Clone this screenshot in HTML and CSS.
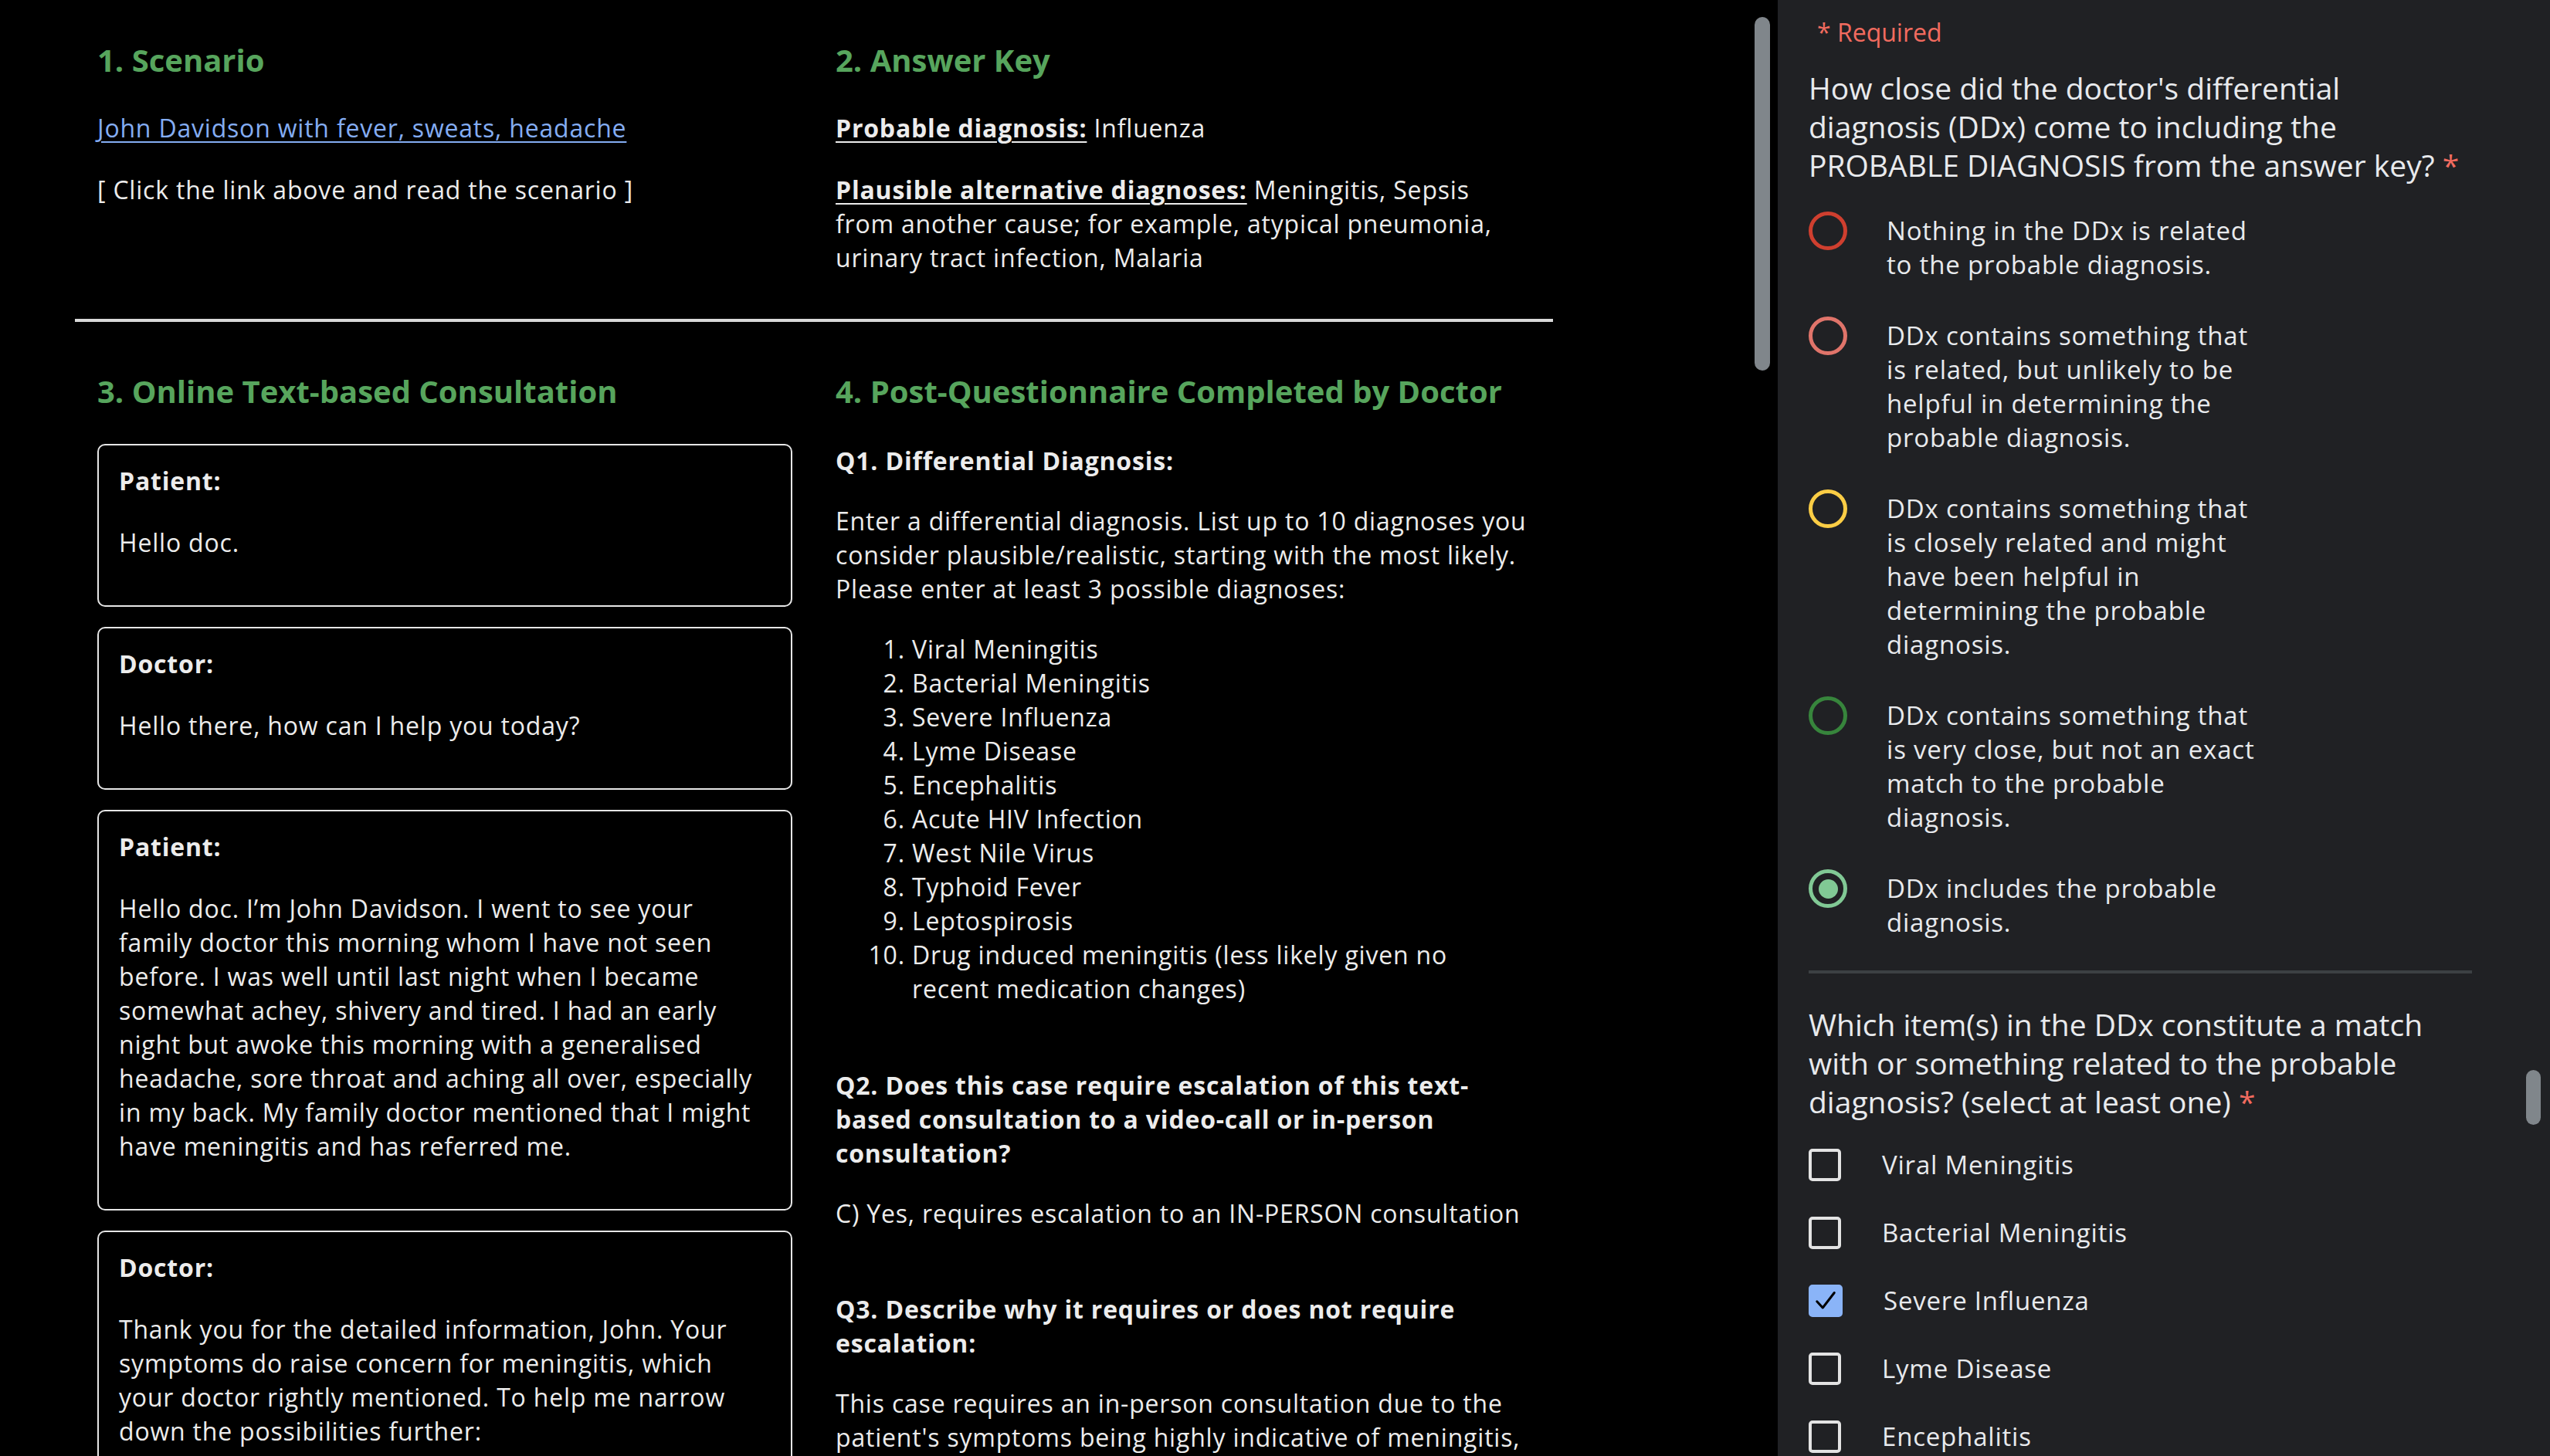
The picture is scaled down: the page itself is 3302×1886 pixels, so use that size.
FILE: index.html
```html
<!DOCTYPE html>
<html lang="en">
<head>
<meta charset="utf-8">
<title>Case review</title>
<link rel="stylesheet" href="styles.css">
</head>
<body>
<div class="app">
  <main class="doc">
    <div class="doc-inner">
      <section class="row row-top">
        <div class="cell">
          <h2 class="sec-title">1. Scenario</h2>
          <p><a class="link" href="#">John Davidson with fever, sweats, headache</a></p>
          <p>[ Click the link above and read the scenario ]</p>
        </div>
        <div class="cell cell-right">
          <h2 class="sec-title">2. Answer Key</h2>
          <p><b class="u">Probable diagnosis:</b> Influenza</p>
          <p><b class="u">Plausible alternative diagnoses:</b> Meningitis, Sepsis from another cause; for example, atypical pneumonia, urinary tract infection, Malaria</p>
        </div>
      </section>
      <section class="row row-main">
        <div class="cell">
          <h2 class="sec-title">3. Online Text-based Consultation</h2>
          <div class="chat">
            <div class="msg">
              <p class="who">Patient:</p>
              <p>Hello doc.</p>
            </div>
            <div class="msg">
              <p class="who">Doctor:</p>
              <p>Hello there, how can I help you today?</p>
            </div>
            <div class="msg">
              <p class="who">Patient:</p>
              <p>Hello doc. I’m John Davidson. I went to see your family doctor this morning whom I have not seen before. I was well until last night when I became somewhat achey, shivery and tired. I had an early night but awoke this morning with a generalised headache, sore throat and aching all over, especially in my back. My family doctor mentioned that I might have meningitis and has referred me.</p>
            </div>
            <div class="msg">
              <p class="who">Doctor:</p>
              <p>Thank you for the detailed information, John. Your symptoms do raise concern for meningitis, which your doctor rightly mentioned. To help me narrow down the possibilities further:</p>
              <p>Have you noticed any rash, neck stiffness or sensitivity to light?</p>
            </div>
          </div>
        </div>
        <div class="cell cell-right">
          <h2 class="sec-title">4. Post-Questionnaire Completed by Doctor</h2>
          <p class="q">Q1. Differential Diagnosis:</p>
          <p>Enter a differential diagnosis. List up to 10 diagnoses you consider plausible/realistic, starting with the most likely. Please enter at least 3 possible diagnoses:</p>
          <ol class="ddx">
            <li>Viral Meningitis</li>
            <li>Bacterial Meningitis</li>
            <li>Severe Influenza</li>
            <li>Lyme Disease</li>
            <li>Encephalitis</li>
            <li>Acute HIV Infection</li>
            <li>West Nile Virus</li>
            <li>Typhoid Fever</li>
            <li>Leptospirosis</li>
            <li>Drug induced meningitis (less likely given no recent medication changes)</li>
          </ol>
          <p class="q">Q2. Does this case require escalation of this text-based consultation to a video-call or in-person consultation?</p>
          <p>C) Yes, requires escalation to an IN-PERSON consultation</p>
          <p class="q q-gap">Q3. Describe why it requires or does not require escalation:</p>
          <p>This case requires an in-person consultation due to the patient's symptoms being highly indicative of meningitis, which needs urgent examination.</p>
        </div>
      </section>
    </div>
    <div class="thumb thumb-doc"></div>
  </main>

  <aside class="form">
    <div class="required">* Required</div>
    <div class="question">
      <div class="q-title">How close did the doctor's differential diagnosis (DDx) come to including the PROBABLE DIAGNOSIS from the answer key? <span class="star">*</span></div>
      <div class="options">
        <label class="opt"><span class="radio r1"></span><span class="opt-text">Nothing in the DDx is related to the probable diagnosis.</span></label>
        <label class="opt"><span class="radio r2"></span><span class="opt-text">DDx contains something that is related, but unlikely to be helpful in determining the probable diagnosis.</span></label>
        <label class="opt"><span class="radio r3"></span><span class="opt-text">DDx contains something that is closely related and might have been helpful in determining the probable diagnosis.</span></label>
        <label class="opt"><span class="radio r4"></span><span class="opt-text">DDx contains something that is very close, but not an exact match to the probable diagnosis.</span></label>
        <label class="opt"><span class="radio r5 checked"></span><span class="opt-text">DDx includes the probable diagnosis.</span></label>
      </div>
    </div>
    <hr class="sep">
    <div class="question">
      <div class="q-title">Which item(s) in the DDx constitute a match with or something related to the probable diagnosis? (select at least one) <span class="star">*</span></div>
      <div class="checks">
        <label class="chk-row"><span class="chk"></span><span>Viral Meningitis</span></label>
        <label class="chk-row"><span class="chk"></span><span>Bacterial Meningitis</span></label>
        <label class="chk-row"><span class="chk on"><svg viewBox="0 0 24 24" width="36" height="36"><path d="M4.5 12.5l5 5.5L19.5 5" fill="none" stroke="#000" stroke-width="2" stroke-linecap="round" stroke-linejoin="round"/></svg></span><span>Severe Influenza</span></label>
        <label class="chk-row"><span class="chk"></span><span>Lyme Disease</span></label>
        <label class="chk-row"><span class="chk"></span><span>Encephalitis</span></label>
        <label class="chk-row"><span class="chk"></span><span>Acute HIV Infection</span></label>
      </div>
    </div>
    <div class="thumb thumb-form"></div>
  </aside>
</div>
</body>
</html>
```
FILE: styles.css
```css
* { box-sizing: border-box; }

html, body {
  margin: 0;
  height: 100%;
  overflow: hidden;
}

body {
  font-family: "Open Sans", Roboto, sans-serif;
  font-size: 32px;
  line-height: 44px;
  letter-spacing: 0.8px;
  color: #ececec;
  background: #000;
}

b, .who, .q {
  font-weight: 700;
  letter-spacing: 0.8px;
}

.app {
  display: flex;
  height: 1886px;
  overflow: hidden;
}

/* ---------- left document ---------- */
.doc {
  position: relative;
  flex: 0 0 2302px;
  background: #000;
  overflow: hidden;
}

.doc-inner {
  margin-left: 97px;
  width: 1914px;
}

.row {
  display: flex;
}

.row-top {
  padding-top: 53px;
  padding-bottom: 21px;
  border-bottom: 4px solid #d9d9d9;
}

.row-main {
  padding-top: 65px;
}

.cell {
  flex: 0 0 956px;
  padding: 0 27px 0 29px;
}

.cell-right {
  flex: 0 0 958px;
  padding-right: 31px;
}

.sec-title {
  margin: 0 0 41px;
  font-size: 40px;
  line-height: 50px;
  font-weight: 700;
  letter-spacing: 0;
  color: #57a55d;
}

.row-main .sec-title {
  margin-bottom: 43px;
}

p {
  margin: 0 0 36px;
}

.link {
  color: #84adf3;
  text-decoration: underline;
  text-decoration-thickness: 2px;
  text-underline-offset: 5px;
}

.u {
  text-decoration: underline;
  text-decoration-thickness: 2px;
  text-underline-offset: 5px;
}

.chat {
  display: flex;
  flex-direction: column;
  gap: 26px;
}

.msg {
  border: 2px solid #e6e6e6;
  border-radius: 10px;
  padding: 24px 26px 23px;
}

.row-main .cell-right p {
  margin-bottom: 34px;
}

.ddx {
  margin: 0 0 81px;
  padding: 0 40px 0 99px;
}

.row-main .cell-right .q-gap {
  margin-top: 80px;
}

.thumb {
  position: absolute;
  width: 20px;
  border-radius: 10px;
  background: #80868b;
}

.thumb-doc {
  left: 2272px;
  top: 22px;
  height: 458px;
}

/* ---------- right form ---------- */
.form {
  position: relative;
  flex: 1;
  background: #202124;
  color: #e8eaed;
  padding: 20px 101px 0 40px;
}

.required {
  color: #f16b5f;
  padding-left: 11px;
  margin-bottom: 25px;
  letter-spacing: 0;
}

.q-title {
  font-size: 39px;
  line-height: 50px;
  letter-spacing: 0;
  margin: 0 0 38px;
}

.star {
  color: #f16b5f;
}

.options {
  display: flex;
  flex-direction: column;
  gap: 48px;
}

.opt {
  display: flex;
  align-items: flex-start;
  font-size: 33px;
}

.radio {
  flex: 0 0 50px;
  height: 50px;
  margin-top: -3px;
  margin-right: 51px;
  border: 5px solid;
  border-radius: 50%;
  display: flex;
  align-items: center;
  justify-content: center;
}

.r1 { border-color: #cf3f2f; }
.r2 { border-color: #e0746a; }
.r3 { border-color: #fbcd45; }
.r4 { border-color: #37853c; }
.r5 { border-color: #81c995; }

.r5.checked::after {
  content: "";
  width: 25px;
  height: 25px;
  border-radius: 50%;
  background: #81c995;
}

.opt-text {
  width: 490px;
}

.sep {
  margin: 40px 0 41px;
  border: 0;
  height: 4px;
  background: #3c4043;
}

.checks {
  display: flex;
  flex-direction: column;
  gap: 44px;
  margin-top: -3px;
}

.chk-row {
  display: flex;
  align-items: center;
  font-size: 33px;
}

.chk {
  flex: 0 0 42px;
  height: 42px;
  margin-right: 53px;
  border: 4px solid #e3e3e3;
  border-radius: 5px;
  display: flex;
  align-items: center;
  justify-content: center;
}

.chk.on {
  background: #8ab4f8;
  border-color: #8ab4f8;
}

.thumb-form {
  right: 12px;
  top: 1386px;
  height: 71px;
  width: 19px;
}
```
